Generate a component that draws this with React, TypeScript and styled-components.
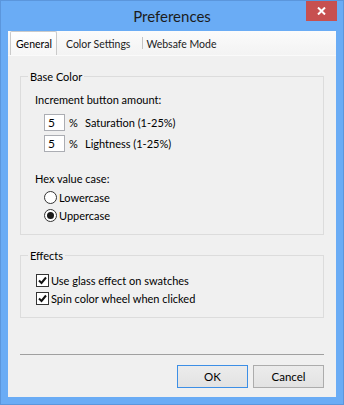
import React from "react";
import styled, { createGlobalStyle } from "styled-components";

const Global = createGlobalStyle`
  html, body { margin: 0; padding: 0; }
  body {
    width: 344px;
    height: 405px;
    overflow: hidden;
    background: #6aacf5;
    font-family: Lato, "Noto Sans", sans-serif;
    font-size: 11px;
    color: #000;
  }
  * { box-sizing: border-box; }
`;

const Window = styled.div`
  width: 344px;
  height: 405px;
  background: #6aacf5;
  border: 1px solid #5b96dc;
  display: flex;
  flex-direction: column;
`;

const TitleBar = styled.div`
  height: 30px;
  display: grid;
  grid-template-columns: 1fr auto 1fr;
  align-items: start;
`;

const Title = styled.div`
  grid-column: 2;
  font-size: 15px;
  line-height: 30px;
  color: #1c1c1c;
`;

const CloseButton = styled.div`
  grid-column: 3;
  justify-self: end;
  width: 31px;
  height: 20px;
  margin-right: 6px;
  background: #c75050;
  display: flex;
  align-items: center;
  justify-content: center;
`;

const Client = styled.div`
  flex: 1;
  margin: 0 7px 7px 7px;
  background: #f0f0f0;
  display: flex;
  flex-direction: column;
`;

const TabStrip = styled.div`
  height: 25px;
  display: flex;
  align-items: flex-end;
  padding-left: 2px;
  background: linear-gradient(#fbfbfb, #f3f3f3);
  border-bottom: 1px solid #fafafa;
  font-size: 10.5px;
`;

const Tab = styled.div<{ $active?: boolean; $ml?: number }>`
  height: ${(p) => (p.$active ? 24 : 23)}px;
  display: flex;
  align-items: center;
  padding: ${(p) => (p.$active ? "0 4px 0 5px" : "0 3px")};
  margin-left: ${(p) => p.$ml ?? 0}px;
  color: ${(p) => (p.$active ? "#000" : "#222")};
  ${(p) =>
    p.$active
      ? `border: 1px solid #cacaca; border-bottom: none; border-radius: 2px 2px 0 0; background: linear-gradient(#ffffff, #f6f6f6);`
      : ``}
`;

const TabSep = styled.div`
  width: 1px;
  height: 12px;
  margin: 0 0 6px 9px;
  background: #c4c4c4;
`;

const Panel = styled.div`
  flex: 1;
  display: flex;
  flex-direction: column;
  padding: 13px 12px 0 12px;
`;

const Group = styled.fieldset<{ $mt?: number }>`
  margin: ${(p) => p.$mt ?? 0}px 0 0 0;
  padding: 0;
  border: 1px solid #dcdcdc;
  min-width: 0;
`;

const Legend = styled.legend`
  margin-left: 7px;
  padding: 0 2px;
  line-height: 15px;
`;

const GroupBody = styled.div<{ $pt: number; $pl: number; $pb: number }>`
  padding: ${(p) => p.$pt}px 0 ${(p) => p.$pb}px ${(p) => p.$pl}px;
  display: flex;
  flex-direction: column;
`;

const Label = styled.div<{ $mt?: number }>`
  line-height: 15px;
  margin-top: ${(p) => p.$mt ?? 0}px;
`;

const InputRow = styled.div<{ $mt: number }>`
  display: flex;
  align-items: center;
  height: 17px;
  margin: ${(p) => p.$mt}px 0 0 9px;
`;

const NumberBox = styled.input`
  width: 21px;
  height: 17px;
  border: 1px solid #abadb3;
  background: #fff;
  padding: 0 0 0 3px;
  margin: 0;
  font: inherit;
  font-size: 12px;
  color: #000;
  outline: none;
`;

const Percent = styled.span`
  width: 16px;
  margin-left: 4px;
`;

const OptionRow = styled.div<{ $ml: number; $mt?: number }>`
  display: flex;
  align-items: center;
  height: 18px;
  margin: ${(p) => p.$mt ?? 0}px 0 0 ${(p) => p.$ml}px;
  gap: 2px;
`;

const RadioCircle = styled.span<{ $checked?: boolean }>`
  width: 13px;
  height: 13px;
  border-radius: 50%;
  border: 1px solid #333;
  background: #fff;
  display: flex;
  align-items: center;
  justify-content: center;
  &::after {
    content: "";
    width: 7px;
    height: 7px;
    border-radius: 50%;
    background: ${(p) => (p.$checked ? "#1a1a1a" : "transparent")};
  }
`;

const CheckSquare = styled.span`
  width: 13px;
  height: 13px;
  border: 1px solid #333;
  background: #fff;
  display: flex;
  align-items: center;
  justify-content: center;
`;

const Footer = styled.div`
  margin-top: auto;
  display: flex;
  flex-direction: column;
`;

const Separator = styled.div`
  height: 1px;
  margin: 0 12px;
  background: #a0a0a0;
`;

const ButtonRow = styled.div`
  display: flex;
  justify-content: flex-end;
  gap: 5px;
  padding: 10px 12px 9px 12px;
`;

const Button = styled.button<{ $default?: boolean }>`
  width: 71px;
  height: 23px;
  margin: 0;
  padding: 0;
  font: inherit;
  font-size: 11.5px;
  color: #000;
  border: 1px solid ${(p) => (p.$default ? "#3d8fe6" : "#acacac")};
  background: linear-gradient(#ececec, #e2e2e2);
`;

const Check = () => (
  <svg width="9" height="9" viewBox="0 0 9 9">
    <path d="M1 4.5 L3.5 7 L8 1.5" fill="none" stroke="#111" strokeWidth="2" />
  </svg>
);

const CloseX = () => (
  <svg width="9" height="8" viewBox="0 0 9 8">
    <path d="M1 0.5 L8 7.5 M8 0.5 L1 7.5" stroke="#fff" strokeWidth="2" />
  </svg>
);

export default function App() {
  return (
    <>
      <Global />
      <Window>
        <TitleBar>
          <Title>Preferences</Title>
          <CloseButton>
            <CloseX />
          </CloseButton>
        </TitleBar>
        <Client>
          <TabStrip>
            <Tab $active>General</Tab>
            <Tab $ml={6}>Color Settings</Tab>
            <TabSep />
            <Tab>Websafe Mode</Tab>
          </TabStrip>
          <Panel>
            <Group>
              <Legend>Base Color</Legend>
              <GroupBody $pt={8} $pl={14} $pb={10}>
                <Label>Increment button amount:</Label>
                <InputRow $mt={7}>
                  <NumberBox readOnly value="5" />
                  <Percent>%</Percent>
                  <span>Saturation (1-25%)</span>
                </InputRow>
                <InputRow $mt={4}>
                  <NumberBox readOnly value="5" />
                  <Percent>%</Percent>
                  <span>Lightness (1-25%)</span>
                </InputRow>
                <Label $mt={19}>Hex value case:</Label>
                <OptionRow $ml={9} $mt={2}>
                  <RadioCircle />
                  <span>Lowercase</span>
                </OptionRow>
                <OptionRow $ml={9}>
                  <RadioCircle $checked />
                  <span>Uppercase</span>
                </OptionRow>
              </GroupBody>
            </Group>
            <Group $mt={13}>
              <Legend>Effects</Legend>
              <GroupBody $pt={8} $pl={15} $pb={10}>
                <OptionRow $ml={0}>
                  <CheckSquare>
                    <Check />
                  </CheckSquare>
                  <span>Use glass effect on swatches</span>
                </OptionRow>
                <OptionRow $ml={0}>
                  <CheckSquare>
                    <Check />
                  </CheckSquare>
                  <span>Spin color wheel when clicked</span>
                </OptionRow>
              </GroupBody>
            </Group>
          </Panel>
          <Footer>
            <Separator />
            <ButtonRow>
              <Button $default>OK</Button>
              <Button>Cancel</Button>
            </ButtonRow>
          </Footer>
        </Client>
      </Window>
    </>
  );
}
